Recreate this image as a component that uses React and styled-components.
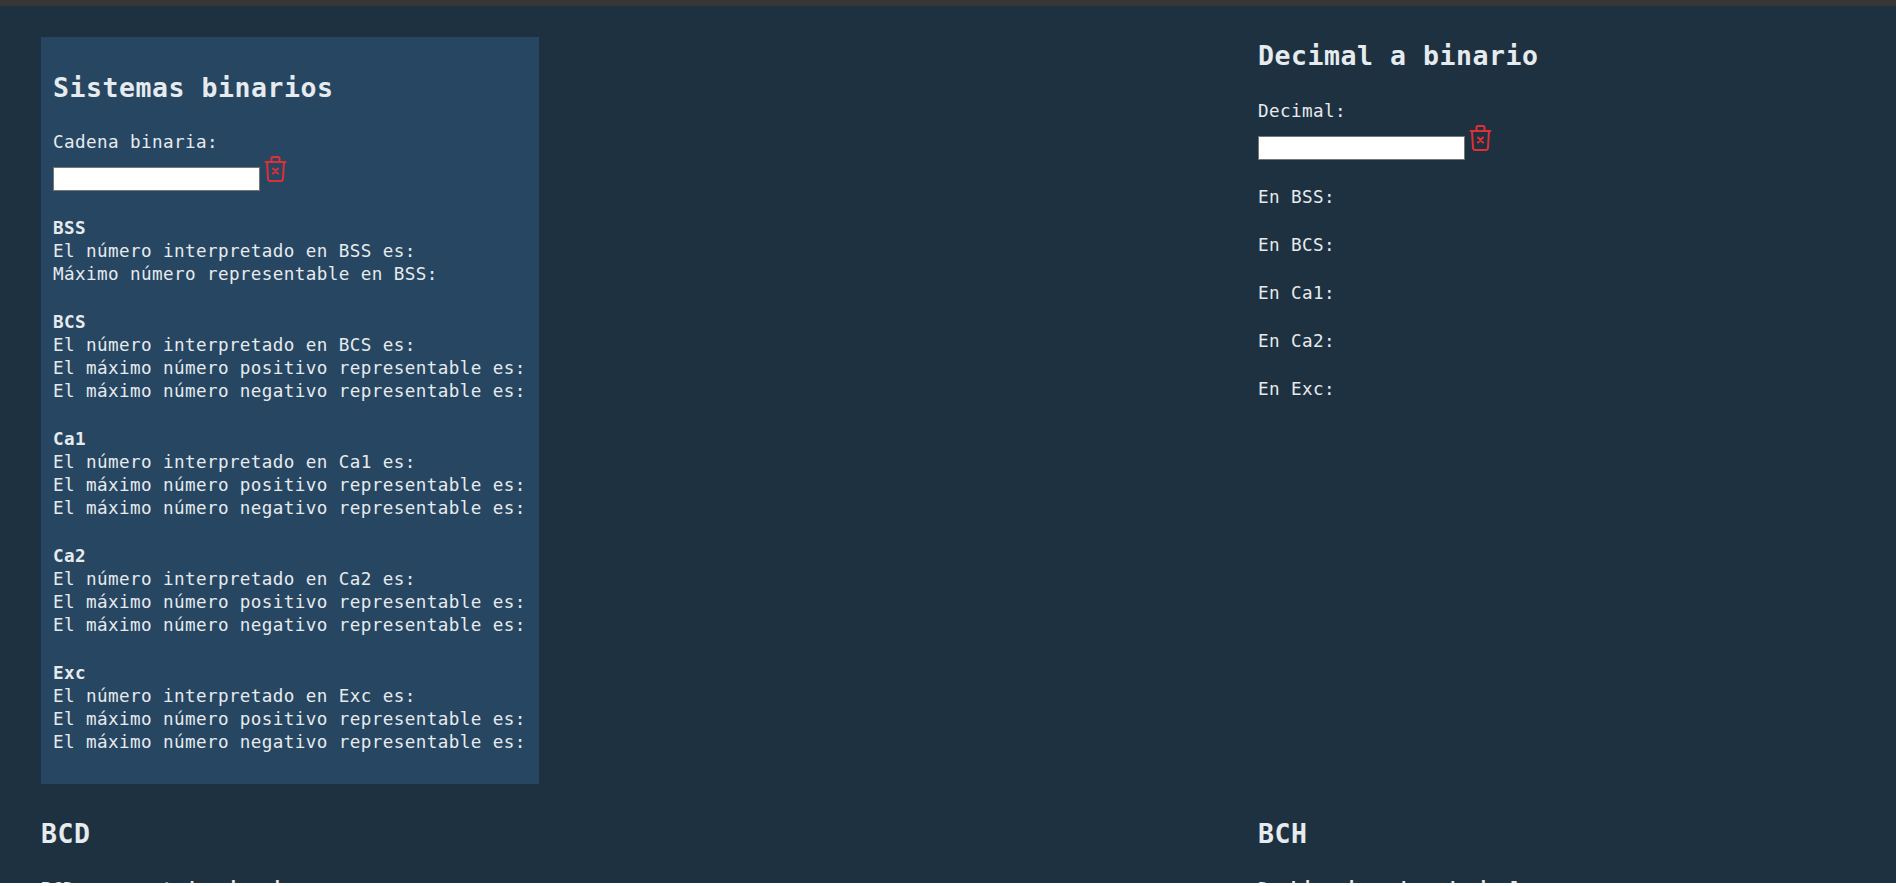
import React from 'react';
import styled, { createGlobalStyle } from 'styled-components';

const GlobalStyle = createGlobalStyle`
  * { box-sizing: border-box; }
  html, body { margin: 0; background: #fff; overflow: hidden; }
`;

const Page = styled.div`
  height: 883px;
  overflow: hidden;
  border-top: 6px solid #363636;
  background: #1e3140;
  color: #e6ebef;
  font: 17.6px/23px Consolas, 'DejaVu Sans Mono', monospace;
  letter-spacing: 0.4px;
  padding: 31px 41px 0;
`;

const Grid = styled.main`
  display: grid;
  grid-template-columns: 1217px 1fr;
  align-items: start;
`;

const Card = styled.section`
  width: 498px;
  height: 747px;
  padding: 33px 12px 0;
  background: #274661;
`;

const Section = styled.section`
  padding-top: ${(p) => p.$top || 0}px;
`;

const Title = styled.h2`
  margin: 0 0 ${(p) => p.$gap || 25}px;
  font-size: 26.5px;
  line-height: 36px;
  letter-spacing: 0.55px;
`;

const Label = styled.label`
  display: block;
`;

const Field = styled.div`
  display: flex;
  align-items: flex-start;
  height: 39px;
  gap: 4px;
`;

const Input = styled.input`
  width: 207px;
  height: 24px;
  margin: 13px 0 0;
  padding: 0 2px;
  border: 1px solid #767676;
  background: #fff;
`;

const ClearButton = styled.button`
  display: flex;
  margin: 0;
  padding: 0;
  border: 0;
  background: none;
  color: #e03037;
`;

const Block = styled.p`
  margin: 0 0 25px;
`;

const Name = styled.strong`
  display: block;
`;

const Line = styled.span`
  display: block;
  white-space: nowrap;
`;

const Results = styled.div`
  padding-top: 24px;
`;

const Trash = () => (
  <svg width="23" height="28" viewBox="0 0 23 28" fill="none" stroke="currentColor" strokeWidth="2" strokeLinecap="round" strokeLinejoin="round">
    <path d="M1.500 8h20M7.500 8V4.500Q7.500 3 9 3h5Q15.500 3 15.500 4.500V8M3 8l1 16.500Q4.100 27 6 27h11Q18.900 27 19 24.500L20 8M9 14.500l5 5M14 14.500l-5 5" />
  </svg>
);

const Entry = ({ label }) => (
  <>
    <Label>{label}</Label>
    <Field>
      <Input />
      <ClearButton aria-label="Borrar"><Trash /></ClearButton>
    </Field>
  </>
);

const limits = [
  'El máximo número positivo representable es:',
  'El máximo número negativo representable es:',
];

const systems = [
  { name: 'BSS', lines: ['Máximo número representable en BSS:'] },
  { name: 'BCS', lines: limits },
  { name: 'Ca1', lines: limits },
  { name: 'Ca2', lines: limits },
  { name: 'Exc', lines: limits },
];

export default function App() {
  return (
    <>
      <GlobalStyle />
      <Page>
        <Grid>
          <Card>
            <Title>Sistemas binarios</Title>
            <Entry label="Cadena binaria:" />
            <Results>
              {systems.map((s) => (
                <Block key={s.name}>
                  <Name>{s.name}</Name>
                  <Line>El número interpretado en {s.name} es:</Line>
                  {s.lines.map((l) => <Line key={l}>{l}</Line>)}
                </Block>
              ))}
            </Results>
          </Card>
          <Section $top={1}>
            <Title $gap={26}>Decimal a binario</Title>
            <Entry label="Decimal:" />
            <Results>
              {systems.map((s) => <Block key={s.name}>En {s.name}:</Block>)}
            </Results>
          </Section>
          <Section $top={32}>
            <Title $gap={26}>BCD</Title>
            <Name>BCD empaquetado sin signo</Name>
          </Section>
          <Section $top={32}>
            <Title $gap={26}>BCH</Title>
            <Name>De binario a hexadecimal</Name>
          </Section>
        </Grid>
      </Page>
    </>
  );
}
